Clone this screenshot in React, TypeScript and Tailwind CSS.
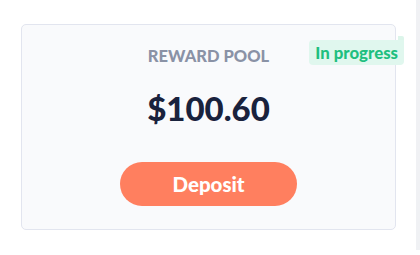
export default function App() {
  return (
    <div className="relative w-[420px] h-[255px] bg-white overflow-hidden" style={{ fontFamily: "Lato, 'Noto Sans', sans-serif" }}>
      <div className="absolute right-0 top-0 w-[4px] h-[250px] bg-[#f0f1f4]" />
      <div className="pt-[24px] pl-[21px]">
        <div className="relative w-[375px] h-[206px] rounded-[5px] border border-[#e2e5ef] bg-[#f9fafc] flex flex-col items-center pt-[19px]">
          <div className="text-[16.5px] leading-[24px] font-black text-[#8a92a6]">REWARD POOL</div>
          <div className="mt-[20px] text-[33px] leading-[40px] font-black text-[#19223d]">$100.60</div>
          <button className="mt-[34px] w-[177px] h-[44px] rounded-full bg-[#ff7f5f] text-white text-[20.5px] font-black leading-none">Deposit</button>
          <div className="absolute top-[11px] right-[-9px] w-[6px] h-[6px] rounded-tr-[2px] bg-[#dcf5ea]" />
          <div className="absolute top-[15px] right-[-9px] h-[25px] px-[6px] rounded-[4px] rounded-tr-none bg-[#e0f7ee] text-[#1fbf80] text-[16.8px] font-black leading-[25px]">In progress</div>
        </div>
      </div>
    </div>
  );
}
